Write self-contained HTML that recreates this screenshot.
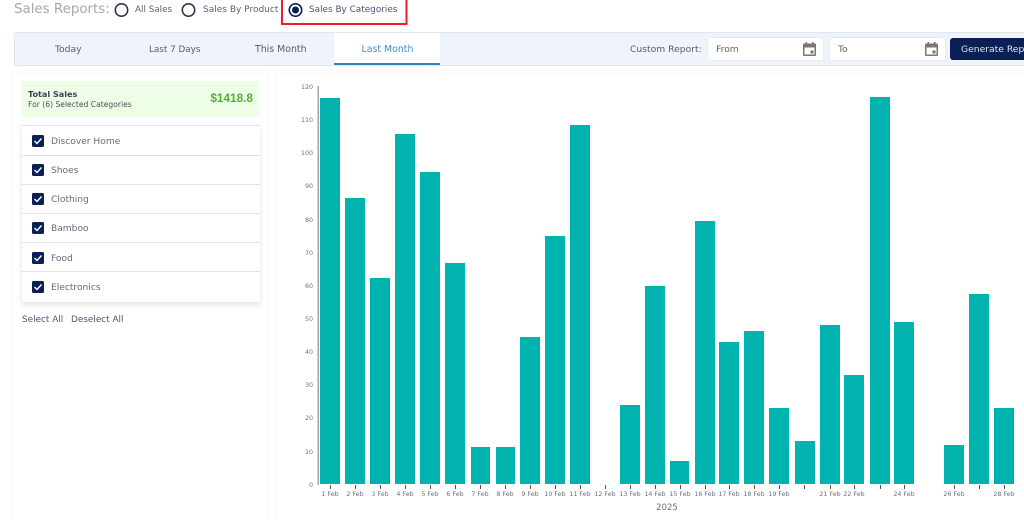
<!DOCTYPE html>
<html><head><meta charset="utf-8"><style>
html,body{margin:0;padding:0;background:#fff;width:1024px;height:520px;overflow:hidden}
#w{width:1024px;height:520px;position:relative;overflow:hidden;font-family:"DejaVu Sans","Liberation Sans",sans-serif;color:#555b70}
.t{position:absolute;white-space:nowrap;line-height:14px}
.b{position:absolute;box-sizing:border-box}
.row{position:absolute;left:22px;width:238px;height:29px;border-top:1.5px solid #e2e2e2;box-sizing:border-box}
</style></head><body><div id="w">
<div class="t" style="left:14px;top:3px;font-size:13.4px;color:#a6a6a6">Sales Reports:</div>
<svg class="b" style="left:0;top:0" width="420" height="30">
<circle cx="121.5" cy="10" r="6.2" fill="none" stroke="#2b3350" stroke-width="1.6"/>
<circle cx="188.5" cy="10" r="6.2" fill="none" stroke="#2b3350" stroke-width="1.6"/>
<circle cx="295.5" cy="10" r="6.2" fill="none" stroke="#0b1f57" stroke-width="1.6"/>
<circle cx="295.5" cy="10" r="3.5" fill="#0b1f57"/>
<rect x="282" y="-2" width="124.5" height="26" fill="none" stroke="#ee1c25" stroke-width="2"/>
</svg>
<div class="t" style="left:135px;top:3px;font-size:8.8px;color:#5b6075">All Sales</div>
<div class="t" style="left:203px;top:3px;font-size:9px;color:#5b6075">Sales By Product</div>
<div class="t" style="left:309px;top:3px;font-size:8.9px;color:#4b5270">Sales By Categories</div>

<div class="b" style="left:14px;top:32px;width:1030px;height:34px;background:#eff4fc;border:1.5px solid #dfe6f2;border-radius:3px"></div>
<div class="b" style="left:334px;top:33px;width:106px;height:32px;background:#fff;border-bottom:2px solid #2a86c4"></div>
<div class="t" style="left:55px;top:43px;font-size:9.2px;color:#555b70">Today</div>
<div class="t" style="left:149px;top:43px;font-size:8.8px;color:#555b70">Last 7 Days</div>
<div class="t" style="left:255px;top:43px;font-size:9.4px;color:#555b70">This Month</div>
<div class="t" style="left:361.5px;top:43px;font-size:9.4px;color:#3d8fcb">Last Month</div>
<div class="t" style="left:630px;top:43px;font-size:9.2px;color:#555b70">Custom Report:</div>
<div class="b" style="left:707px;top:37px;width:117px;height:24px;background:#fff;border:1px solid #e6ebf4;border-radius:3px"></div>
<div class="b" style="left:829px;top:37px;width:117px;height:24px;background:#fff;border:1px solid #e6ebf4;border-radius:3px"></div>
<div class="t" style="left:716px;top:43px;font-size:9.2px;color:#666">From</div>
<div class="t" style="left:838px;top:43px;font-size:9.2px;color:#666">To</div>
<svg class="b" style="left:802px;top:41px" width="15" height="16" viewBox="0 0 15 16"><path d="M2 2.5h11a1 1 0 0 1 1 1v10.5a1 1 0 0 1-1 1H2a1 1 0 0 1-1-1V3.5a1 1 0 0 1 1-1zM2.5 6.5v7h10v-7z" fill="#777" fill-rule="evenodd"/><rect x="3.5" y="1" width="1.6" height="3" fill="#777"/><rect x="10" y="1" width="1.6" height="3" fill="#777"/><rect x="8.5" y="9.5" width="3" height="3" fill="#777"/></svg>
<svg class="b" style="left:924px;top:41px" width="15" height="16" viewBox="0 0 15 16"><path d="M2 2.5h11a1 1 0 0 1 1 1v10.5a1 1 0 0 1-1 1H2a1 1 0 0 1-1-1V3.5a1 1 0 0 1 1-1zM2.5 6.5v7h10v-7z" fill="#777" fill-rule="evenodd"/><rect x="3.5" y="1" width="1.6" height="3" fill="#777"/><rect x="10" y="1" width="1.6" height="3" fill="#777"/><rect x="8.5" y="9.5" width="3" height="3" fill="#777"/></svg>
<div class="b" style="left:950px;top:38px;width:90px;height:22px;background:#0b1f57;border-radius:3px"></div>
<div class="t" style="left:961px;top:43px;font-size:9.2px;color:#dfe4ee">Generate Report</div>

<div class="b" style="left:14px;top:73px;width:253px;height:460px;background:#fff;box-shadow:0 0 5px rgba(0,0,0,.06)"></div>
<div class="b" style="left:277px;top:73px;width:760px;height:460px;background:#fff;box-shadow:0 0 5px rgba(0,0,0,.06)"></div>

<div class="b" style="left:22px;top:81px;width:237px;height:36px;background:#edfde6"></div>
<div class="t" style="left:28px;top:87px;font-size:8.1px;font-weight:bold;color:#3e4356">Total Sales</div>
<div class="t" style="left:28px;top:98px;font-size:7.6px;color:#4b5060">For (6) Selected Categories</div>
<div class="t" style="right:771px;top:91px;font-size:11.8px;font-weight:bold;font-family:'Liberation Sans',sans-serif;color:#4cb52f">$1418.8</div>

<div class="b" style="left:22px;top:125px;width:238px;height:177px;background:#fff;box-shadow:0 3px 6px rgba(0,0,0,.12)"></div>
<div class="row" style="top:125px"></div>
<div class="row" style="top:155px"></div>
<div class="row" style="top:184px"></div>
<div class="row" style="top:213px"></div>
<div class="row" style="top:242px"></div>
<div class="row" style="top:271px"></div>
<svg class="b" style="left:30px;top:131px" width="16" height="170">
<g fill="#0b1f57"><rect x="2" y="4" width="12" height="12" rx="1.5"/><rect x="2" y="33" width="12" height="12" rx="1.5"/><rect x="2" y="62" width="12" height="12" rx="1.5"/><rect x="2" y="91" width="12" height="12" rx="1.5"/><rect x="2" y="121" width="12" height="12" rx="1.5"/><rect x="2" y="150" width="12" height="12" rx="1.5"/></g>
<g fill="none" stroke="#fff" stroke-width="1.4"><path d="M4.5 10l2.5 2.5 4.5-5"/><path d="M4.5 39l2.5 2.5 4.5-5"/><path d="M4.5 68l2.5 2.5 4.5-5"/><path d="M4.5 97l2.5 2.5 4.5-5"/><path d="M4.5 127l2.5 2.5 4.5-5"/><path d="M4.5 156l2.5 2.5 4.5-5"/></g>
</svg>
<div class="t" style="left:51px;top:135px;font-size:9.1px;color:#666a7c">Discover Home</div>
<div class="t" style="left:51px;top:164px;font-size:9.1px;color:#666a7c">Shoes</div>
<div class="t" style="left:51px;top:193px;font-size:9.1px;color:#666a7c">Clothing</div>
<div class="t" style="left:51px;top:222px;font-size:9.1px;color:#666a7c">Bamboo</div>
<div class="t" style="left:51px;top:252px;font-size:9.1px;color:#666a7c">Food</div>
<div class="t" style="left:51px;top:281px;font-size:9.1px;color:#666a7c">Electronics</div>
<div class="t" style="left:22px;top:313px;font-size:8.9px;color:#4b5578">Select All</div>
<div class="t" style="left:71px;top:313px;font-size:8.9px;color:#4b5578">Deselect All</div>

<svg class="b" style="left:0;top:0" width="1024" height="520">
<rect x="317.5" y="86" width="1.5" height="399" fill="#a6a6ad"/>
<g fill="#00b3ae">
<rect x="320" y="98" width="20" height="386"/>
<rect x="345" y="198" width="20" height="286"/>
<rect x="370" y="278" width="20" height="206"/>
<rect x="395" y="134" width="20" height="350"/>
<rect x="420" y="172" width="20" height="312"/>
<rect x="445" y="263" width="20" height="221"/>
<rect x="471" y="447" width="19" height="37"/>
<rect x="496" y="447" width="19" height="37"/>
<rect x="520" y="337" width="20" height="147"/>
<rect x="545" y="236" width="20" height="248"/>
<rect x="570" y="125" width="20" height="359"/>
<rect x="620" y="405" width="20" height="79"/>
<rect x="645" y="286" width="20" height="198"/>
<rect x="670" y="461" width="19" height="23"/>
<rect x="695" y="221" width="20" height="263"/>
<rect x="719" y="342" width="20" height="142"/>
<rect x="744" y="331" width="20" height="153"/>
<rect x="769" y="408" width="20" height="76"/>
<rect x="795" y="441" width="20" height="43"/>
<rect x="820" y="325" width="20" height="159"/>
<rect x="844" y="375" width="20" height="109"/>
<rect x="870" y="97" width="20" height="387"/>
<rect x="894" y="322" width="20" height="162"/>
<rect x="944" y="445" width="20" height="39"/>
<rect x="969" y="294" width="20" height="190"/>
<rect x="994" y="408" width="20" height="76"/>
</g>
<g stroke="#555" stroke-width="1"><path d="M330.5 485v4M355.5 485v4M380.5 485v4M405.5 485v4M430.5 485v4M455.5 485v4M480.5 485v4M505.5 485v4M530.5 485v4M555.5 485v4M580.5 485v4M605.5 485v4M630.5 485v4M655.5 485v4M680.5 485v4M705.5 485v4M729.5 485v4M754.5 485v4M779.5 485v4M804.5 485v4M830.5 485v4M854.5 485v4M880.5 485v4M904.5 485v4M954.5 485v4M979.5 485v4M1004.5 485v4"/></g>
<g font-family="'DejaVu Sans','Liberation Sans',sans-serif" font-size="6.3" fill="#6b6f7e" text-anchor="end">
<text x="313" y="89">120</text><text x="313" y="122">110</text><text x="313" y="155">100</text><text x="313" y="188">90</text><text x="313" y="222">80</text><text x="313" y="255">70</text><text x="313" y="288">60</text><text x="313" y="321">50</text><text x="313" y="354">40</text><text x="313" y="387">30</text><text x="313" y="420">20</text><text x="313" y="454">10</text><text x="313" y="487">0</text>
</g>
<g font-family="'DejaVu Sans','Liberation Sans',sans-serif" font-size="6.3" fill="#6b6f7e" text-anchor="middle">
<text x="330" y="496">1 Feb</text><text x="355" y="496">2 Feb</text><text x="380" y="496">3 Feb</text><text x="405" y="496">4 Feb</text><text x="430" y="496">5 Feb</text><text x="455" y="496">6 Feb</text><text x="480" y="496">7 Feb</text><text x="505" y="496">8 Feb</text><text x="530" y="496">9 Feb</text><text x="555" y="496">10 Feb</text><text x="580" y="496">11 Feb</text><text x="605" y="496">12 Feb</text><text x="630" y="496">13 Feb</text><text x="655" y="496">14 Feb</text><text x="680" y="496">15 Feb</text><text x="705" y="496">16 Feb</text><text x="729" y="496">17 Feb</text><text x="754" y="496">18 Feb</text><text x="779" y="496">19 Feb</text><text x="830" y="496">21 Feb</text><text x="854" y="496">22 Feb</text><text x="904" y="496">24 Feb</text><text x="954" y="496">26 Feb</text><text x="1004" y="496">28 Feb</text>
</g>
<text x="667" y="510" font-family="'DejaVu Sans','Liberation Sans',sans-serif" font-size="8.5" fill="#6b6f7e" text-anchor="middle">2025</text>
</svg>
</div></body></html>
